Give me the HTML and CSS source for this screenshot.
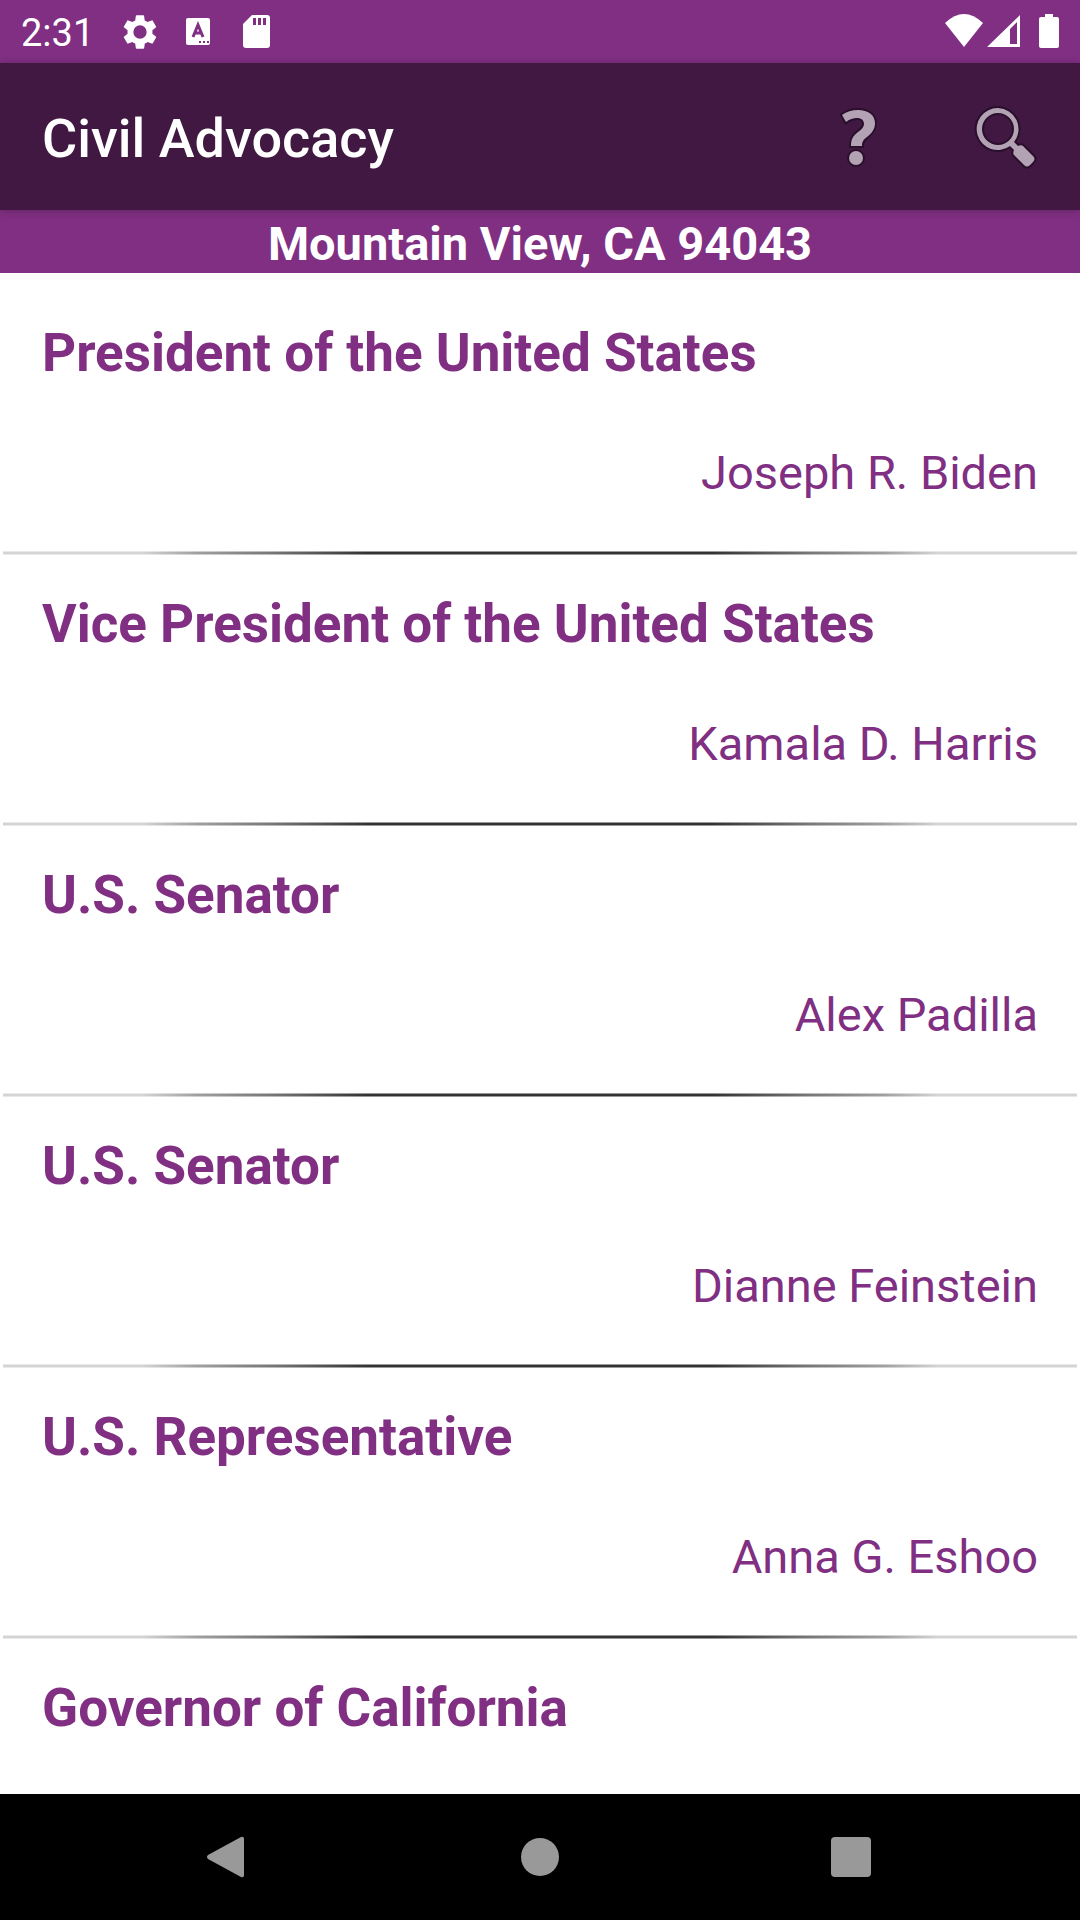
FILE: index.html
```html
<!DOCTYPE html>
<html lang="en">
<head>
<meta charset="utf-8">
<meta name="viewport" content="width=device-width, initial-scale=1">
<title>Civil Advocacy</title>
<link rel="stylesheet" href="styles.css">
</head>
<body>
<div class="screen">
  <div class="status-bar">
    <div class="status-left">
      <span class="clock">2:31</span>
      <svg class="status-icon" viewBox="0 0 24 24" aria-hidden="true"><path fill-rule="evenodd" d="M19.4 13c.04-.3.07-.6.07-1s-.03-.7-.07-1l2.1-1.65c.2-.15.25-.42.13-.64l-2-3.46c-.12-.22-.4-.3-.6-.22l-2.5 1a7.3 7.3 0 0 0-1.7-.98l-.37-2.65A.5.5 0 0 0 14 2h-4a.5.5 0 0 0-.5.42l-.37 2.65c-.6.25-1.17.59-1.69.98l-2.5-1c-.22-.09-.48 0-.6.22l-2 3.46c-.13.22-.07.49.13.64L4.57 11c-.04.3-.07.64-.07 1s.03.68.07 1l-2.1 1.65c-.2.15-.25.42-.13.64l2 3.46c.12.22.39.3.6.22l2.5-1c.52.4 1.08.73 1.69.98l.37 2.65c.04.24.25.4.5.4h4c.25 0 .46-.16.5-.4l.37-2.65c.61-.25 1.17-.59 1.69-.98l2.5 1c.22.09.48 0 .6-.22l2-3.46c.12-.22.07-.49-.13-.64zM12 8a4 4 0 1 1 0 8 4 4 0 0 1 0-8z"/></svg>
      <svg class="status-icon" viewBox="0 0 40 40" aria-hidden="true"><path d="M10 6h20a2 2 0 0 1 2 2v23a2 2 0 0 1-2 2H10a2 2 0 0 1-2-2V8a2 2 0 0 1 2-2z"/><path class="cut-line" d="M15 25l5-12 5 12M17 21h6"/><path class="cut" d="M21 29h2v2h-2zM25 29h2v2h-2zM29 29h2v2h-2z"/></svg>
      <svg class="status-icon" viewBox="0 0 40 40" aria-hidden="true"><path d="M16 3h15a3 3 0 0 1 3 3v27a3 3 0 0 1-3 3H10a3 3 0 0 1-3-3V12z"/><path class="cut" d="M17 6h3v7h-3zM22 6h3v7h-3zM27 6h3v7h-3z"/></svg>
    </div>
    <div class="status-right">
      <svg class="status-icon" viewBox="0 0 40 40" aria-hidden="true"><path d="M1 11Q20-7 39 11L20 35z"/></svg>
      <svg class="status-icon signal" viewBox="0 0 40 40" aria-hidden="true"><path fill-rule="evenodd" d="M36 3v32H3zM26 17v15h7V10z"/></svg>
      <svg class="status-icon" viewBox="0 0 40 40" aria-hidden="true"><path d="M16 2h8v3h4a2 2 0 0 1 2 2v27a2 2 0 0 1-2 2H12a2 2 0 0 1-2-2V7a2 2 0 0 1 2-2h4z"/></svg>
    </div>
  </div>

  <header class="app-bar">
    <h1 class="app-title">Civil Advocacy</h1>
    <button class="action" type="button" aria-label="About">
      <svg class="action-icon" viewBox="-1 -2 72 72" aria-hidden="true"><path d="M19 12Q26 7 35 7C45 7 52 12 52 20C52 26 49 30 44 34C40 37 39 39 39 43H28C28 36 30 33 35 29C39 26 41 24 41 21C41 17 38 15 34 15C30 15 27 16 23 19z"/><circle cx="33" cy="55" r="7"/></svg>
    </button>
    <button class="action" type="button" aria-label="Search">
      <svg class="action-icon" viewBox="0 -1 72 72" aria-hidden="true"><path fill-rule="evenodd" d="M28 6a21 21 0 1 0 12 38l4 4c-1 2-1 4 0 5l10 10c2 2 4 2 6 0l3-3c2-2 2-4 0-6L53 44c-1-1-3-1-5 0l-4-4A21 21 0 0 0 28 6zM28 11a16 16 0 1 1 0 32 16 16 0 0 1 0-32z"/></svg>
    </button>
  </header>

  <p class="location">Mountain View, CA 94043</p>

  <main class="officials">
    <ul class="official-list">
      <li class="official"><h2 class="office">President of the United States</h2><p class="name">Joseph R. Biden</p></li>
      <li class="official"><h2 class="office">Vice President of the United States</h2><p class="name">Kamala D. Harris</p></li>
      <li class="official"><h2 class="office">U.S. Senator</h2><p class="name">Alex Padilla</p></li>
      <li class="official"><h2 class="office">U.S. Senator</h2><p class="name">Dianne Feinstein</p></li>
      <li class="official"><h2 class="office">U.S. Representative</h2><p class="name">Anna G. Eshoo</p></li>
      <li class="official"><h2 class="office">Governor of California</h2></li>
    </ul>
  </main>

  <nav class="nav-bar">
    <button class="nav-button" type="button" aria-label="Back"><svg class="nav-icon" viewBox="0 0 48 48" aria-hidden="true"><path d="M3 22L36 4q3-1 3 2v36q0 3-3 2L3 26q-2-2 0-4z"/></svg></button>
    <button class="nav-button" type="button" aria-label="Home"><svg class="nav-icon" viewBox="0 0 48 48" aria-hidden="true"><circle cx="24" cy="24" r="19"/></svg></button>
    <button class="nav-button" type="button" aria-label="Recent apps"><svg class="nav-icon" viewBox="0 0 48 48" aria-hidden="true"><rect x="4" y="4" width="40" height="40" rx="4"/></svg></button>
  </nav>
</div>
</body>
</html>
```
FILE: styles.css
```css
:root {
  --purple: #802f83;
  --dark: #401842;
}

* {
  box-sizing: border-box;
}

body,
h1,
h2,
p,
ul {
  margin: 0;
}

body {
  font-family: Roboto, sans-serif;
  background: #fff;
}

button {
  padding: 0;
  border: 0;
  background: none;
}

.screen {
  display: flex;
  flex-direction: column;
  height: 100vh;
}

.status-bar {
  display: flex;
  justify-content: space-between;
  align-items: center;
  height: 63px;
  flex: none;
  padding: 0 11px 0 21px;
  background: var(--purple);
  color: #fff;
}

.status-left {
  display: flex;
  align-items: center;
  gap: 18px;
}

.status-right {
  display: flex;
  align-items: center;
}

.clock {
  margin-right: 8px;
  padding-top: 2px;
  font-size: 38px;
  line-height: 44px;
}

.status-icon {
  width: 40px;
  height: 40px;
  fill: #fff;
}

.signal {
  margin-right: 5px;
}

.cut {
  fill: var(--purple);
}

.cut-line {
  fill: none;
  stroke: var(--purple);
  stroke-width: 3;
}

.app-bar {
  display: flex;
  align-items: center;
  height: 147px;
  flex: none;
  padding-left: 42px;
  background: var(--dark);
  box-shadow: 0 1px 8px rgba(0, 0, 0, 0.25);
  position: relative;
}

.app-title {
  flex: 1;
  padding-top: 4px;
  color: #fff;
  font-size: 54px;
  font-weight: 500;
  line-height: 64px;
}

.action {
  display: grid;
  place-items: center;
  width: 148px;
  height: 147px;
}

.action-icon {
  width: 72px;
  height: 72px;
  fill: #b3a1b4;
  stroke: #2a0f2c;
  stroke-width: 4;
  paint-order: stroke;
}

.location {
  flex: none;
  padding: 6px 0 1px;
  background: var(--purple);
  color: #fff;
  font-size: 47px;
  font-weight: 700;
  line-height: 56px;
  text-align: center;
}

.officials {
  flex: 1;
  min-height: 0;
  overflow: hidden;
  padding-top: 11px;
}

.official-list {
  padding: 0;
  list-style: none;
}

.official {
  display: flex;
  flex-direction: column;
  gap: 60px;
  padding: 37px 42px 54px;
  color: var(--purple);
}

/* Hairline under each row: dark in the middle, fading to grey, with softened edges */
.official:not(:last-child) {
  background-image:
    linear-gradient(rgba(255, 255, 255, 0.5) 0 1px, transparent 1px 3px, rgba(255, 255, 255, 0.5) 3px),
    linear-gradient(to right, #d4d4d4 0 13%, #a0a0a0 18%, #777 25%, #333 34% 66%, #777 75%, #a0a0a0 82%, #d4d4d4 87%);
  background-position: center bottom;
  background-repeat: no-repeat;
  background-size: calc(100% - 6px) 4px;
}

.office {
  font-size: 53px;
  font-weight: 700;
  line-height: 64px;
}

.name {
  font-size: 47px;
  line-height: 56px;
  text-align: right;
}

.nav-bar {
  display: flex;
  justify-content: center;
  height: 126px;
  flex: none;
  background: #000;
}

.nav-button {
  display: grid;
  place-items: center;
  width: 311px;
}

.nav-icon {
  width: 48px;
  height: 48px;
  fill: #999;
}
```
